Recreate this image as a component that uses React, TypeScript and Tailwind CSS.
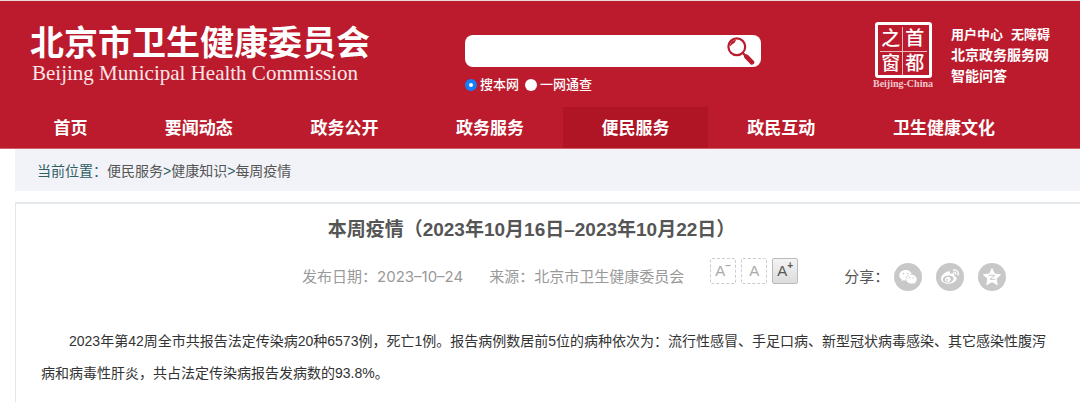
import { useState } from "react";
import { AiFillWechat } from "react-icons/ai";
import { FaWeibo } from "react-icons/fa";

const navItems = ["首页", "要闻动态", "政务公开", "政务服务", "便民服务", "政民互动", "卫生健康文化"];

const scopes = [
  { id: "site", label: "搜本网" },
  { id: "all", label: "一网通查" },
];

const crumbs = ["便民服务", "健康知识", "每周疫情"];

const sizes = [
  { id: "small", sign: "−", label: "缩小字号" },
  { id: "normal", sign: "", label: "默认字号" },
  { id: "large", sign: "+", label: "放大字号" },
];

function SearchIcon() {
  return (
    <svg viewBox="0 0 28 28" className="w-7 h-7" fill="none" aria-hidden="true">
      <circle cx="9.8" cy="9.8" r="8.4" stroke="#bb1b2c" strokeWidth="2.2" />
      <path d="M3 9.4C3 5.6 5.6 3 9 3L7.6 5.8L5 7.4Z" fill="#bb1b2c" />
      <path d="M15.8 16l3 3" stroke="#bb1b2c" strokeWidth="2.4" />
      <path d="M19.4 19.6l5.6 5.8" stroke="#bb1b2c" strokeWidth="4.6" strokeLinecap="round" />
    </svg>
  );
}

function QzoneIcon() {
  return (
    <svg viewBox="0 0 20 20" className="w-5 h-5" aria-hidden="true">
      <path
        d="M10 1.6l2.5 5.4 6 .7-4.400 4 1.200 5.900-5.300-2.900-5.300 2.900 1.200-5.900-4.400-4 6-.7z"
        fill="white"
        stroke="white"
        strokeWidth="1"
        strokeLinejoin="round"
      />
      <path d="M6.8 8.4c2-.4 4.200-.4 6 0l-4.800 3.800c2 .3 3.600.3 5.400 0" fill="none" stroke="#c8c8c8" strokeWidth="1" />
    </svg>
  );
}

const shares = [
  { label: "微信", icon: <AiFillWechat className="w-5 h-5" /> },
  { label: "微博", icon: <FaWeibo className="w-[18px] h-[18px]" /> },
  { label: "QQ空间", icon: <QzoneIcon /> },
];

function Seal() {
  return (
    <a href="#" className="flex flex-col items-center w-16 mt-[21px]">
      <span className="grid grid-cols-2 w-[57px] h-14 p-[2px] border-3 border-white rounded-[3px] font-['Liberation_Serif','Noto_Sans_CJK_SC',serif] text-[19px] leading-6 font-medium text-center">
        <span className="border-r border-b border-white/70">之</span>
        <span className="border-b border-white/70">首</span>
        <span className="border-r border-white/70">窗</span>
        <span>都</span>
      </span>
      <span className="font-['Liberation_Serif',serif] text-[10px] leading-3 font-bold text-[#f0c8cc] whitespace-nowrap">
        Beijing-China
      </span>
    </a>
  );
}

export default function App() {
  const [scope, setScope] = useState("site");
  const [size, setSize] = useState("large");
  const [query, setQuery] = useState("");

  return (
    <div className="bg-white font-['Liberation_Sans','Noto_Sans_CJK_SC',sans-serif]">
      <header className="bg-[#bb1b2c] border-t border-[#ead9d6] text-white">
        <div className="flex h-[106px] pl-[30px] pr-[30px]">
          {/* Site name */}
          <a href="#" className="flex flex-col w-[435px] pt-[22px] whitespace-nowrap">
            <span className="text-[34px] leading-10 font-bold">北京市卫生健康委员会</span>
            <span className="pl-0.5 font-['Liberation_Serif',serif] text-[21px] leading-5 text-[#fae6e8]">
              Beijing Municipal Health Commission
            </span>
          </a>

          {/* Search */}
          <form className="w-[296px] pt-[34px]" onSubmit={(e) => e.preventDefault()}>
            <div className="flex items-center h-8 pl-3 pr-1.5 bg-white rounded-lg">
              <input
                type="text"
                aria-label="搜索"
                value={query}
                onChange={(e) => setQuery(e.target.value)}
                className="flex-1 min-w-0 text-sm text-gray-800 outline-none"
              />
              <button type="submit" aria-label="搜索">
                <SearchIcon />
              </button>
            </div>
            <div className="flex items-center gap-1.5 mt-2 text-[13px] leading-5 font-medium">
              {scopes.map((item) => (
                <label key={item.id} className="flex items-center gap-[3px]">
                  <input
                    type="radio"
                    name="scope"
                    checked={scope === item.id}
                    onChange={() => setScope(item.id)}
                    className="appearance-none w-3 h-3 rounded-full bg-white checked:border-4 checked:border-[#147efb]"
                  />
                  {item.label}
                </label>
              ))}
            </div>
          </form>

          <div className="flex ml-auto">
            <Seal />
            <div className="flex flex-col w-[99px] ml-4 pt-[23px] text-sm leading-[21px] font-bold whitespace-nowrap">
              <div className="flex justify-between text-[13px]">
                <a href="#">用户中心</a>
                <a href="#">无障碍</a>
              </div>
              <a href="#">北京政务服务网</a>
              <a href="#">智能问答</a>
            </div>
          </div>
        </div>

        <nav className="grid grid-cols-[111px_repeat(5,1fr)_180px] h-[42px] pl-[15px] pr-[46px] text-[17px] font-bold border-b border-[#d0616c]">
          {navItems.map((item) => (
            <a
              key={item}
              href="#"
              className={`flex items-center justify-center pt-0.5 ${item === "便民服务" ? "bg-[#b01526]" : ""}`}
            >
              {item}
            </a>
          ))}
        </nav>
      </header>

      <main className="pl-[15px]">
        <div className="flex items-center h-[42px] pt-0.5 pl-[22px] bg-[#f2f3f8] text-[14px] text-[#2f6064]">
          <span>当前位置：</span>
          {crumbs.map((item, i) => (
            <span key={item}>
              {i > 0 && ">"}
              <a href="#" className="text-[#555]">
                {item}
              </a>
            </span>
          ))}
        </div>

        <article className="mt-[11px] pl-[25px] pr-[26px] pb-8 border-t-2 border-l border-[#e4e7ec]">
          <h1 className="pt-3 pr-8 text-[19px] leading-7 font-bold text-center text-[#555]">
            本周疫情（2023年10月16日–2023年10月22日）
          </h1>

          <div className="flex items-center h-9 mt-[15px] pl-[261px] text-[15px] text-[#999] whitespace-nowrap">
            <span>
              发布日期：<time className="font-['Inter',sans-serif]" dateTime="2023-10-24">2023–10–24</time>
            </span>
            <span className="ml-[26px]">来源：北京市卫生健康委员会</span>

            <div className="flex gap-[5px] ml-[26px] mb-3">
              {sizes.map((item) => (
                <button
                  key={item.id}
                  type="button"
                  aria-label={item.label}
                  onClick={() => setSize(item.id)}
                  className={`flex items-center justify-center w-[26px] h-[26px] border rounded-[2px] ${
                    size === item.id
                      ? "border-[#bbb] bg-linear-to-b from-[#f4f4f4] to-[#dcdcdc] text-[#555]"
                      : "border-dashed border-[#ccc] text-[#aaa]"
                  }`}
                >
                  A
                  {item.sign && <span className="self-start text-[10px] leading-[14px] font-bold">{item.sign}</span>}
                </button>
              ))}
            </div>

            <div className="flex items-center gap-[14px] ml-[46px] text-[#555]">
              <span className="-mr-[9px]">分享：</span>
              {shares.map((item) => (
                <a
                  key={item.label}
                  href="#"
                  aria-label={item.label}
                  className="flex items-center justify-center w-7 h-7 rounded-full bg-[#c8c8c8] text-white"
                >
                  {item.icon}
                </a>
              ))}
            </div>
          </div>

          <p className="mt-[30px] indent-[2em] text-[14px] leading-8 text-[#333]">
            2023年第42周全市共报告法定传染病20种6573例，死亡1例。报告病例数居前5位的病种依次为：流行性感冒、手足口病、新型冠状病毒感染、其它感染性腹泻病和病毒性肝炎，共占法定传染病报告发病数的93.8%。
          </p>
        </article>
      </main>
    </div>
  );
}
